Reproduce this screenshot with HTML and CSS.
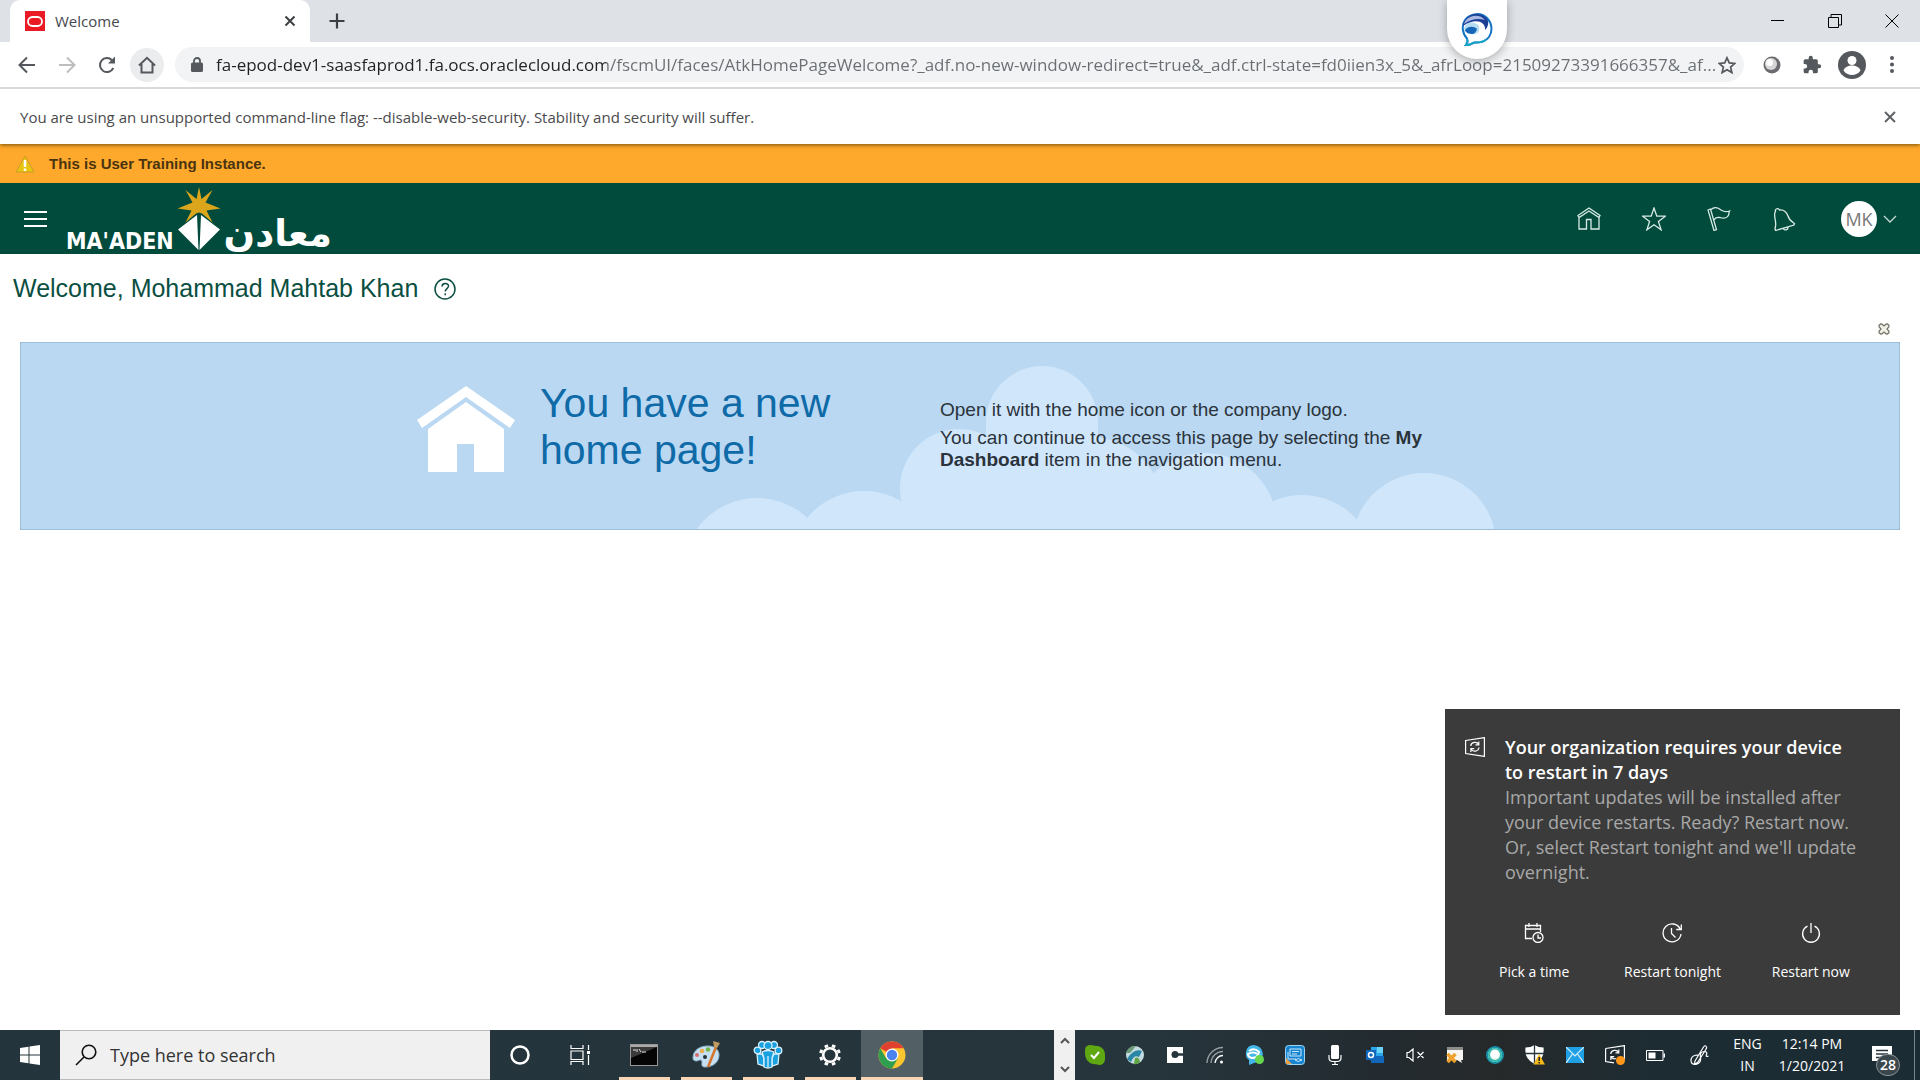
FILE: index.html
```html
<!DOCTYPE html>
<html lang="en">
<head>
<meta charset="utf-8">
<meta name="viewport" content="width=device-width, initial-scale=1">
<title>Welcome</title>
<link rel="stylesheet" href="styles.css">
</head>
<body>
<div class="desktop">
  <header class="browser">
    <div class="tabstrip">
      <div class="tab">
        <svg class="favicon" width="20" height="20" viewBox="0 0 20 20"><rect width="20" height="20" fill="#ea1b24"/><rect x="3" y="6" width="14" height="9" rx="4.500" fill="none" stroke="#fff" stroke-width="1.800"/></svg>
        <span class="tab-title">Welcome</span>
        <button class="icon-btn tab-close" aria-label="Close tab"><svg width="12" height="12" viewBox="0 0 12 12"><path d="M1.500 1.500l9 9M10.500 1.500l-9 9" stroke="#3c4043" stroke-width="2"/></svg></button>
      </div>
      <button class="icon-btn new-tab" aria-label="New tab"><svg width="16" height="16" viewBox="0 0 16 16"><path d="M8 0.500v15M0.500 8h15" stroke="#3c4043" stroke-width="2.200"/></svg></button>
      <div class="window-controls">
        <button class="icon-btn" aria-label="Minimize"><svg width="14" height="14" viewBox="0 0 14 14"><path d="M0 6.500h13" stroke="#000"/></svg></button>
        <button class="icon-btn" aria-label="Restore"><svg width="14" height="14" viewBox="0 0 14 14" fill="none" stroke="#000"><path d="M0.500 3.500h10v10h-10zM3 3.500v-3h10.500v10.500h-3"/></svg></button>
        <button class="icon-btn" aria-label="Close"><svg width="14" height="14" viewBox="0 0 14 14"><path d="M0.500 0.500l13 13M13.500 0.500l-13 13" stroke="#000"/></svg></button>
      </div>
    </div>
    <div class="toolbar">
      <button class="icon-btn nav-btn" aria-label="Back"><svg width="18" height="18" viewBox="0 0 18 18" fill="none" stroke="#55585c" stroke-width="2"><path d="M17 9H2M9 1.500L1.500 9 9 16.500"/></svg></button>
      <button class="icon-btn nav-btn" aria-label="Forward"><svg width="18" height="18" viewBox="0 0 18 18" fill="none" stroke="#bdbec0" stroke-width="2"><path d="M1 9h15M9 1.500L16.500 9 9 16.500"/></svg></button>
      <button class="icon-btn nav-btn" aria-label="Reload"><svg width="18" height="18" viewBox="0 0 18 18"><path d="M15.300 12A7 7 0 1 1 14 4.200" fill="none" stroke="#55585c" stroke-width="2"/><path d="M17 0.500V7.500H10z" fill="#55585c"/></svg></button>
      <button class="icon-btn nav-btn nav-home" aria-label="Home"><svg width="18" height="18" viewBox="0 0 18 18" fill="none" stroke="#55585c" stroke-width="2"><path d="M1 9.500L9 1.800l8 7.700M3.500 8v8.500h11V8"/></svg></button>
      <div class="omnibox">
        <svg width="12" height="16" viewBox="0 0 12 16"><rect y="5.500" width="12" height="9.500" rx="1.500" fill="#55585c"/><path d="M3 6V4a3 3 0 0 1 6 0v2" fill="none" stroke="#55585c" stroke-width="1.800"/></svg>
        <input class="url" type="text" aria-label="Address" value="fa-epod-dev1-saasfaprod1.fa.ocs.oraclecloud.com/fscmUI/faces/AtkHomePageWelcome?_adf.no-new-window-redirect=true&amp;_adf.ctrl-state=fd0iien3x_5&amp;_afrLoop=21509273391666357&amp;_af...">
        <button class="icon-btn" aria-label="Bookmark this page"><svg width="18" height="18" viewBox="0 0 18 18"><path d="M9 1.800l2.300 5.100 5.500.500-4.200 3.700 1.300 5.500L9 13.700l-4.900 2.900 1.300-5.500L1.200 7.400l5.500-.500z" fill="none" stroke="#55585c" stroke-width="1.700"/></svg></button>
      </div>
      <button class="icon-btn tool-btn" aria-label="Extension"><svg width="18" height="18" viewBox="0 0 18 18"><circle cx="9" cy="9" r="8.500" fill="#6b6c6f"/><circle cx="8" cy="8" r="6" fill="#d6d6d6"/><circle cx="6.500" cy="6.500" r="3.500" fill="#fff"/></svg></button>
      <button class="icon-btn tool-btn" aria-label="Extensions"><svg width="20" height="20" viewBox="0 0 24 24"><path fill="#55585c" d="M20.500 11H19V7a2 2 0 0 0-2-2h-4V3.500a2.500 2.500 0 0 0-5 0V5H4a2 2 0 0 0-2 2v3.800h1.500a2.700 2.700 0 0 1 0 5.400H2V20a2 2 0 0 0 2 2h3.800v-1.500a2.700 2.700 0 0 1 5.400 0V22H17a2 2 0 0 0 2-2v-4h1.500a2.500 2.500 0 0 0 0-5z"/></svg></button>
      <button class="icon-btn tool-btn" aria-label="Profile"><svg width="28" height="28" viewBox="0 0 28 28"><circle cx="14" cy="14" r="14" fill="#55585c"/><circle cx="14" cy="9.500" r="4.500" fill="#fff"/><path d="M5.500 19.500c1-3.500 5-5 8.500-5s7.500 1.500 8.500 5a10.200 10.200 0 0 1-17 0z" fill="#fff"/></svg></button>
      <button class="icon-btn tool-btn" aria-label="Menu"><svg width="4" height="17" viewBox="0 0 4 17" fill="#55585c"><circle cx="2" cy="2" r="2"/><circle cx="2" cy="8.500" r="2"/><circle cx="2" cy="15" r="2"/></svg></button>
    </div>
    <div class="infobar">
      <p>You are using an unsupported command-line flag: --disable-web-security. Stability and security will suffer.</p>
      <button class="icon-btn" aria-label="Dismiss"><svg width="12" height="12" viewBox="0 0 12 12"><path d="M1 1l10 10M11 1L1 11" stroke="#5f6368" stroke-width="2"/></svg></button>
    </div>
    <div class="assistant"><svg width="32" height="34" viewBox="0 0 32 34">
      <path d="M6 25.500C1 20 .5 12 4 7 9 0 20-1 26 5c5 5 6 13 2 19-4 5-9 6-14 5.500-3 0-4 3-9 2.500 2-2 2-4 1-6.500z" fill="#fff" stroke="#1473c4" stroke-width="2"/>
      <path d="M5 6C10-.5 20-.5 25.500 5c2.500 3 2.500 8-1.500 12 1-8-9-13-22-4 0-3 1-5 3-7z" fill="#1c3f94"/><path d="M5 7C11 1 20 2 24 7 17 5 10 6 3 11q.5-2 2-4z" fill="#a9b9e4"/>
      <path d="M3 15C6 8 14 8 18 13c1 4 0 6-3 8C9 22 4 20 3 15z" fill="#b7dbf3"/><path d="M4 17c3-4 9-4 12-1-1 3-2 4-4 5-4 0-7-1-8-4z" fill="#1565b8"/><path d="M14 9c4 1 6 5 4 9 3-1 5-3 5-5-2-3-5-4-9-4z" fill="#fff"/>
      <path d="M6 26c1 3 0 4-1 6 5 .5 6-2.500 9-2.500q7 .5 11-3" fill="none" stroke="#18a3c9" stroke-width="2"/></svg></div>
  </header>

  <div class="instance-banner">
    <svg width="20" height="18" viewBox="0 0 20 18"><path d="M10 1l9 16H1z" fill="#e9c40f" stroke="#c99c28" stroke-linejoin="round"/><path d="M10 5v7M10 13.500v2.500" stroke="#fff" stroke-width="2.500"/></svg>
    <strong>This is User Training Instance.</strong>
  </div>

  <nav class="app-header">
    <button class="icon-btn menu-btn" aria-label="Navigator"><svg width="24" height="16" viewBox="0 0 24 16"><path d="M0 1h23M0 8h23M0 15h23" stroke="#fff" stroke-width="2"/></svg></button>
    <a class="logo" href="#">
      <span class="logo-latin">MA'ADEN</span>
      <svg width="46" height="66" viewBox="175 186 46 66">
        <path d="M198 187l2.500 12 11-9-7 12.500 15 6-14 2 6 12-10.500-9-3-1-3 1-10.500 9 6-12-14-2 15-6-7-12.500 11 9z" fill="#dba51c"/>
        <path d="M196 215l1.500 35L177 229.500zM200 215l19 14.500L198.500 250z" fill="#fff"/>
      </svg>
      <span class="logo-arabic" lang="ar">معادن</span>
    </a>
    <div class="header-tools">
      <a class="tool" href="#" aria-label="Home"><svg width="24" height="24" viewBox="0 0 24 24"><path d="M2 10.500v11.500h7.500v-9.500h4.500V22H22V10.500M1 8.500L12 1l11 7.500-1 2L12 4 2 10.500z"/></svg></a>
      <a class="tool" href="#" aria-label="Favorites"><svg width="24" height="24" viewBox="0 0 24 24"><path d="M12 1l2.800 8.200h8.600l-7 5.200 2.700 8.400L12 17.700l-7.100 5.100 2.700-8.400-7-5.200h8.600z"/></svg></a>
      <a class="tool" href="#" aria-label="Watchlist"><svg width="24" height="24" viewBox="0 0 24 24"><path d="M1 3l2.500-1 6 20.500-2.500 1zM4 2.500c3-2.500 7-2 10 .5 3 2 6 2 8.500 1-1 2 0 3-1.500 5-2 3-5 2.500-8 1.500-3-.5-5 .5-6 2.500"/></svg></a>
      <a class="tool" href="#" aria-label="Notifications"><svg width="24" height="24" viewBox="0 0 24 24"><path d="M3.500 4.500a2 2 0 1 1 4-1.500c4-.5 7 2 8.500 6 1 4 3 5 6.500 7.500L22 18 3.500 23.500 3 21.500c1.500-4 .5-7 0-10C2.500 8 2 6 3.500 4.500zM11.500 21.500c.5 2.500 5 1.500 4.500-1.500"/></svg></a>
      <button class="user" aria-label="Settings and actions"><span class="avatar">MK</span><svg width="14" height="8" viewBox="0 0 14 8"><path d="M1 1l6 6 6-6" fill="none" stroke="#c5dbd6" stroke-width="1.300"/></svg></button>
    </div>
  </nav>

  <main class="page">
    <div class="page-title">
      <h1>Welcome, Mohammad Mahtab Khan</h1>
      <button class="icon-btn" aria-label="Help"><svg width="22" height="22" viewBox="0 0 22 22" fill="none" stroke="#0b4f42" stroke-width="1.500"><circle cx="11" cy="11" r="10"/><path d="M8 8.500c0-4 6.500-4 6.500-.500 0 2.500-3.300 2.700-3.300 5.500M11.200 15.300v2"/></svg></button>
    </div>
    <div class="notice-tools"><button class="icon-btn" aria-label="Close notice"><svg width="12" height="12" viewBox="0 0 12 12"><path d="M1 2.500L2.500 1l1.500.2 2 1.800 2-1.800L9.500 1 11 2.500 10.800 4 9 6l1.800 2 .2 1.500L9.500 11 8 10.800 6 9l-2 1.800-1.500.2L1 9.500 1.200 8 3 6 1.200 4z" fill="#f2f1e8" stroke="#77766c" stroke-width="1.300"/></svg></button></div>
    <section class="notice">
      <div class="notice-inner">
        <svg class="clouds" width="810" height="168" viewBox="693 361 810 168" fill="#d0e6fb">
          <circle cx="757" cy="572" r="74"/><circle cx="864" cy="565" r="74"/><circle cx="959" cy="488" r="59"/><circle cx="1042" cy="422" r="56"/><circle cx="1090" cy="511" r="74"/><circle cx="1204" cy="526" r="73"/><circle cx="1302" cy="569" r="74"/><circle cx="1424" cy="545" r="72"/><path d="M986 422h112v60h106v60H905v-54h81z"/>
        </svg>
        <svg class="house" width="98" height="88" viewBox="0 0 98 88" fill="#fff"><path d="M49 0l49 34-5 8-44-31L5 42l-5-8z"/><path d="M49 16l38 27v43H57V58H40v28H11V43z"/></svg>
        <h2>You have a new<br>home page!</h2>
        <div class="notice-text">
          <p>Open it with the home icon or the company logo.</p>
          <p>You can continue to access this page by selecting the <b>My Dashboard</b> item in the navigation menu.</p>
        </div>
      </div>
    </section>
  </main>

  <aside class="toast">
    <svg class="toast-icon" width="20" height="20" viewBox="0 0 20 20" fill="none" stroke="#fff" stroke-width="1.200"><path d="M.6 3.500L19.400.6v18.800L.6 16.500z"/><path d="M5.700 9c.500-4 6-5 8-1.500M13.800 4.500v3.300h-3.300M14 10.500c-.500 4-6 5-8 1.500M5.900 15v-3.300h3.300"/></svg>
    <div class="toast-text">
      <h3>Your organization requires your device to restart in 7 days</h3>
      <p>Important updates will be installed after your device restarts. Ready? Restart now. Or, select Restart tonight and we'll update overnight.</p>
    </div>
    <div class="toast-actions">
      <button><svg width="20" height="20" viewBox="0 0 20 20"><path d="M8 15.500H1.500V2.500h15V9M1.500 6h15M5 0v4M13 0v4"/><circle cx="14" cy="14.500" r="5"/><path d="M14 11.500v3.500h3"/></svg>Pick a time</button>
      <button><svg width="20" height="20" viewBox="0 0 20 20"><path d="M19 11a9 9 0 1 1-.800-5M19.300 1.500v5h-5M9.500 5v5.500l4 4"/></svg>Restart tonight</button>
      <button><svg width="20" height="20" viewBox="0 0 20 20"><path d="M6.500 3.200a8.400 8.400 0 1 0 7 0M10 0v10"/></svg>Restart now</button>
    </div>
  </aside>

  <footer class="taskbar">
    <button class="task start" aria-label="Start"><svg width="20" height="20" viewBox="0 0 20 20" fill="#fff"><path d="M0 3l8.500-1.300v7.800H0zM9.500 1.500L20 0v9.500H9.500zM0 10.500h8.500v7.800L0 17zM9.500 10.500H20V20L9.500 18.500z"/></svg></button>
    <label class="search">
      <svg width="22" height="22" viewBox="0 0 22 22" fill="none" stroke="#111" stroke-width="1.600"><circle cx="14" cy="8" r="6.800"/><path d="M9 13l-8 8"/></svg>
      <input type="text" placeholder="Type here to search" aria-label="Type here to search">
    </label>
    <button class="task" aria-label="Cortana"><svg width="20" height="20" viewBox="0 0 20 20"><circle cx="10" cy="10" r="8.500" fill="none" stroke="#fff" stroke-width="2.500"/></svg></button>
    <button class="task" aria-label="Task View"><svg width="20" height="20" viewBox="0 0 20 20" fill="none" stroke="#fff" stroke-width="1.200"><path d="M1 0v3.500h12V0M1 20v-3.500h12V20M1 6h12v8.500H1zM18.500 0v5M18.500 10v10"/><path d="M17 6h3v3h-3z" fill="#fff" stroke="none"/></svg></button>
    <div class="apps">
      <button class="task app" aria-label="Command Prompt"><svg width="28" height="22" viewBox="0 0 28 22"><rect x=".5" y=".5" width="27" height="21" fill="#050505" stroke="#989898"/><path d="M1 1h26v2H1z" fill="#aaa"/><path d="M1 3h26L1 14z" fill="#3b3b3b"/><path d="M3 6h3M7 5v3M9 5l2 3M12 8h4" stroke="#ddd"/></svg></button>
      <button class="task app" aria-label="Paint"><svg width="30" height="30" viewBox="0 0 30 30"><path d="M2 18C2 10 9 6 17 6c7 0 11 4 11 9 0 7-6 12-14 12-4 0-3-3-3-5 0-3-3-2-5-1-3 0-4-1-4-3z" fill="#c6e0f1" stroke="#8fb5ce"/><circle cx="6" cy="15" r="2" fill="#d86a6a"/><circle cx="11" cy="11" r="2.300" fill="#e9b04d"/><circle cx="17" cy="9.500" r="2.300" fill="#75b64b"/><circle cx="14" cy="17" r="2" fill="#24343c"/><path d="M25 7l-8 20" stroke="#d5742b" stroke-width="2.500"/><path d="M22 1l7 2-3 5-3-1z" fill="#c19a60"/></svg></button>
      <button class="task app" aria-label="Teamwork"><svg width="30" height="30" viewBox="0 0 30 30" fill="#1a9fdf" stroke="#d9f2ff" stroke-width="1.300"><circle cx="9" cy="5" r="3.500"/><circle cx="21" cy="5" r="3.500"/><circle cx="4.500" cy="10.500" r="3.300"/><circle cx="25.500" cy="10.500" r="3.300"/><path d="M4 14h5l2 4v8l-6-2zM26 14h-5l-2 4v8l6-2z"/><circle cx="15" cy="5.500" r="4"/><path d="M9 12q6-3 12 0l-2 6v9q-4 2-8 0v-9z"/><path d="M15 16v11"/></svg></button>
      <button class="task app" aria-label="Settings"><svg width="24" height="24" viewBox="0 0 24 24" fill="none" stroke="#fff"><circle cx="12" cy="12" r="6.800" stroke-width="2.600"/><path d="M20 12h3M1 12h3M12 1v3M12 20v3M17.700 6.300l2-2M4.300 19.700l2-2M6.300 6.300l-2-2M17.700 17.700l2 2" stroke-width="3.600" transform="rotate(22.500 12 12)"/></svg></button>
      <button class="task app active" aria-label="Google Chrome"><svg width="28" height="28" viewBox="0 0 28 28"><circle cx="14" cy="14" r="13.500" fill="#fbc52f"/><path d="M14 14L2.300 7.300A13.500 13.500 0 0 1 25.700 7.300H14z" fill="#e2402f"/><path d="M14 14L8.200 17.400 2.300 7.300A13.500 13.500 0 0 0 14 27.500l5.800-10.100z" fill="#2f9e4f"/><circle cx="14" cy="14" r="6.500" fill="#fff"/><circle cx="14" cy="14" r="5.200" fill="#4a83ee"/></svg></button>
    </div>
    <div class="scroller">
      <button class="icon-btn" aria-label="Scroll up"><svg width="10" height="7" viewBox="0 0 10 7"><path d="M1 6l4-4 4 4" fill="none" stroke="#555" stroke-width="2"/></svg></button>
      <button class="icon-btn" aria-label="Scroll down"><svg width="10" height="7" viewBox="0 0 10 7"><path d="M1 1l4 4 4-4" fill="none" stroke="#555" stroke-width="2"/></svg></button>
    </div>
    <div class="tray">
      <span><svg width="20" height="20" viewBox="0 0 20 20"><path d="M0 5q0-5 6-5 4 1 7 1 7 2 7 9v5q-1 5-6 5-3-1-6-1Q0 17 0 8z" fill="#5fa811"/><path d="M6 10l3 3 5-6" fill="none" stroke="#fff" stroke-width="2"/></svg></span>
      <span><svg width="20" height="20" viewBox="0 0 20 20"><circle cx="10" cy="10" r="9" fill="#c3dbe0"/><path d="M2 14q7-11 15-8l-3 6q-5-3-8 5z" fill="#2a86a5"/><path d="M1 8q3-8 10-7L5 8z" fill="#6a9a76"/><path d="M10 13q4-2 5 4-3 3-6 2z" fill="#60a445"/></svg></span>
      <span><svg width="16" height="16" viewBox="0 0 16 16"><rect width="16" height="16" fill="#fff"/><circle cx="8" cy="7.500" r="3.500" fill="#26343c"/><path d="M8 7.500h8" stroke="#26343c" stroke-width="2.500"/></svg></span>
      <span><svg width="18" height="18" viewBox="0 0 18 18" fill="none" stroke="#98a0a5" stroke-width="1.300"><path d="M1 17A16 16 0 0 1 17 1.500M5 17A12 12 0 0 1 17 5.500"/><path d="M9 17a8 8 0 0 1 8-7.500" stroke="#fff"/><circle cx="15.500" cy="16" r="1.500" fill="#fff" stroke="none"/></svg></span>
      <span><svg width="20" height="20" viewBox="0 0 20 20"><path d="M1 7Q2 0 9 0q8 1 9 9-1 8-9 9l-5 2V15Q0 12 1 7z" fill="#42b6e6"/><path d="M4 6q5-4 10 1-1 6-7 6-4-1-4-4 6-3 9 0" fill="none" stroke="#fff" stroke-width="2"/><circle cx="14.500" cy="14.500" r="4.500" fill="#67d64f"/></svg></span>
      <span><svg width="20" height="20" viewBox="0 0 20 20"><rect x=".5" y=".5" width="19" height="19" rx="3" fill="#1684cf" stroke="#9dd4f4"/><path d="M5 4h11v7H5zM7 6.500h7M7 9h5M3 7v7h8M10 15q3-3 7 0-4 3-7 0" fill="none" stroke="#c6e8fb"/><path d="M1 13l6 6H1z" fill="#e9a04a"/></svg></span>
      <span><svg width="14" height="20" viewBox="0 0 14 20"><rect x="3" y="0" width="8" height="14" rx="1.500" fill="#fff"/><path d="M1 10v3q0 3.500 4 3.500h4q4 0 4-3.500v-3M7 17v3M4 19.500h6" fill="none" stroke="#fff" stroke-width="1.200"/></svg></span>
      <span><svg width="18" height="18" viewBox="0 0 18 18"><path d="M5 1h12v15H5z" fill="#28a8ea"/><path d="M11 1h6v6h-6z" fill="#69d0f7"/><path d="M5 10h13v7H5z" fill="#1066b8"/><rect y="4" width="10" height="10" fill="#0f66bd"/><circle cx="5" cy="9" r="2.500" fill="none" stroke="#fff" stroke-width="1.500"/></svg></span>
      <span><svg width="19" height="14" viewBox="0 0 19 14" fill="none" stroke="#fff" stroke-width="1.200"><path d="M1 4.500h2L7 1v12L3 9.500H1zM11.500 4l6 6M17.500 4l-6 6"/></svg></span>
      <span><svg width="18" height="18" viewBox="0 0 18 18"><path d="M1 1h16v13h-2l1 3-5-3H1z" fill="#f6f4f0"/><path d="M1 1h16v3H1z" fill="#8c8c88"/><path d="M1.500 8l8 8M9.500 8l-8 8" stroke="#f0a12b" stroke-width="3.500"/></svg></span>
      <span><svg width="18" height="18" viewBox="0 0 18 18"><circle cx="9" cy="9" r="8" fill="#d9f3f0" stroke="#1690a8" stroke-width="2"/><circle cx="9" cy="9" r="6" fill="none" stroke="#35b9a8" stroke-width="2"/><circle cx="9" cy="8" r="4.500" fill="#fff"/></svg></span>
      <span><svg width="20" height="20" viewBox="0 0 20 20"><path d="M9.500 0q4 2.500 9 2.500Q20 14 9.500 19-1 14 .5 2.500 6 2.500 9.500 0z" fill="#fff"/><path d="M9.500 0v19M0 8.500h19" stroke="#26343c" stroke-width="1.300"/><path d="M14 9l6 10.500H8.500z" fill="#f6b91c"/><path d="M14.200 12v4M14.200 17v1.500" stroke="#222" stroke-width="1.500"/></svg></span>
      <span><svg width="18" height="16" viewBox="0 0 18 16"><rect width="18" height="16" fill="#1fa0e4"/><path d="M0 0l9 9 9-9M0 16l6.500-9M18 16l-6.500-9" fill="none" stroke="#d7f0ff" stroke-width="1.200"/></svg></span>
      <span><svg width="20" height="20" viewBox="0 0 20 20" fill="none" stroke="#fff" stroke-width="1.200"><path d="M.6 3.500L19.400.6v14M9 17.800L.6 16.500v-13"/><path d="M5.700 9c.500-4 6-5 8-1.500M13.800 4.500v3.300h-3.300M11 13.500q-3.500 1-5-1.500M5.900 15v-3.300h3.300"/><circle cx="15.500" cy="15.500" r="4.500" fill="#ff981a" stroke="none"/></svg></span>
      <span><svg width="19" height="11" viewBox="0 0 19 11"><path d="M.5.500h16.500v10H.5z" fill="none" stroke="#fff"/><path d="M2.500 2.500h7v6h-7zM17.500 3.500h1.500v4h-1.500z" fill="#fff"/></svg></span>
      <span class="pen"><svg width="20" height="20" viewBox="0 0 20 20" fill="none" stroke="#fff" stroke-width="1.200"><path d="M5 16L13.500 2q2-2.500 3 0 .5 1-1 3L7.500 17.500 4.500 19zM8 10Q2 10 1 14.500q-.5 5 4.500 5 6-1 5-7t4-6q3 0 2 3t2 1.500"/></svg></span>
    </div>
    <div class="status language"><span>ENG</span><span>IN</span></div>
    <div class="status clock"><span>12:14 PM</span><span>1/20/2021</span></div>
    <button class="task notifications" aria-label="Notifications"><svg width="20" height="19" viewBox="0 0 20 19"><path d="M0 0h20v15H9l-4 4v-4H0z" fill="#fff"/><path d="M4 4.500h12M4 8h12M4 11.500h8" stroke="#26343c" stroke-width="1.300"/></svg><span class="count">28</span></button>
    <div class="peek"></div>
  </footer>
</div>
</body>
</html>
```
FILE: styles.css
```css
* { box-sizing: border-box; }
body { margin: 0; font-family: "Open Sans", "Noto Sans", sans-serif; background: #fff; }
h1, h2, h3, p { margin: 0; font-weight: 400; }
button, input { font: inherit; color: inherit; border: 0; padding: 0; background: none; }
svg { display: block; flex: none; }
.desktop { min-height: 100vh; display: flex; flex-direction: column; }
.icon-btn { display: flex; align-items: center; justify-content: center; }

/* Browser chrome */
.browser { position: relative; box-shadow: 0 1px 4px rgba(60, 40, 0, .7); }
.tabstrip { height: 42px; display: flex; align-items: center; background: #dee1e6; padding-left: 10px; }
.tab { width: 300px; height: 42px; display: flex; align-items: center; gap: 10px; padding: 0 14px 0 15px; background: #fff; border-radius: 10px 10px 0 0; }
.tab-title { flex: 1; font-size: 15px; color: #45484c; }
.new-tab { width: 54px; height: 42px; }
.window-controls { margin-left: auto; display: flex; }
.window-controls .icon-btn { width: 57px; height: 36px; }
.toolbar { height: 47px; display: flex; align-items: center; padding: 0 8px 0 10px; border-bottom: 2px solid #d9d9da; }
.nav-btn { width: 34px; height: 34px; margin-right: 6px; border-radius: 17px; }
.nav-home { background: #ebecee; }
.omnibox { flex: 1; min-width: 0; height: 35px; margin: 0 8px 0 5px; padding: 0 8px 0 16px; display: flex; align-items: center; background: #f1f3f4; border-radius: 18px; }
.url { flex: 1; min-width: 0; height: 30px; margin-left: 13px; font-size: 17px; color: transparent; background: linear-gradient(90deg, #202124 390px, #6a6e73 390px); background-clip: text; -webkit-background-clip: text; }
.tool-btn { width: 40px; height: 40px; }
.infobar { min-height: 55px; display: flex; align-items: center; justify-content: space-between; padding: 0 24px 0 20px; background: #fff; font-size: 15px; color: #4a4a4c; }
.assistant { position: absolute; top: 0; right: 413px; width: 60px; height: 59px; padding: 13px 0 0 14px; background: #fff; border-radius: 0 0 30px 30px; box-shadow: 0 2px 10px rgba(0, 0, 0, .3); }

/* Application header */
.instance-banner { min-height: 39px; display: flex; align-items: center; gap: 14px; padding: 0 15px; background: #ffa92c; font-family: "Liberation Sans", Arial, sans-serif; font-size: 15px; color: #4a3410; }
.app-header { min-height: 71px; display: flex; align-items: center; background: #004b3b; padding: 0 23px 0 24px; font-family: "Liberation Sans", Arial, sans-serif; }
.logo { display: flex; align-items: flex-end; gap: 2px; height: 66px; margin-left: 18px; color: #fff; text-decoration: none; font-weight: 700; }
.logo-latin { font-family: "DejaVu Sans Condensed", "DejaVu Sans", sans-serif; font-size: 23px; line-height: 22px; }
.logo-arabic { font-family: "DejaVu Sans", sans-serif; font-size: 37px; line-height: 36px; }
.header-tools { margin-left: auto; display: flex; align-items: center; }
.tool { width: 65px; display: flex; justify-content: center; }
.tool svg { fill: none; stroke: #d8ebe6; stroke-width: 1.300; }
.user { display: flex; align-items: center; gap: 6px; margin-left: 25px; }
.avatar { width: 36px; height: 36px; border-radius: 50%; background: #fff; color: #777; font: 18px/36px "Open Sans", sans-serif; }

/* Page */
.page { flex: 1; padding: 0 20px; font-family: "Liberation Sans", Arial, sans-serif; }
.page-title { display: flex; align-items: center; gap: 16px; min-height: 69px; margin-left: -7px; }
.page-title h1 { font-size: 25px; color: #0b4f42; }
.notice-tools { display: flex; justify-content: flex-end; padding: 0 10px 7px; }
.notice { border: 1px solid #9cc0dc; background: #bad8f2; overflow: hidden; }
.notice-inner { position: relative; max-width: 1086px; min-height: 186px; margin: 0 auto; padding-bottom: 12px; display: grid; grid-template-columns: 98px 375px 1fr; column-gap: 25px; align-items: center; }
.clouds { position: absolute; right: 0; bottom: 0; }
.house, .notice h2, .notice-text { position: relative; }
.notice h2 { font-size: 41px; line-height: 47px; color: #0f6aa8; padding-bottom: 6px; }
.notice-text { max-width: 500px; padding-top: 10px; font-size: 19px; line-height: 22px; color: #2b333b; }
.notice-text p + p { margin-top: 6px; }

/* Toast */
.toast { position: fixed; right: 20px; bottom: 65px; width: 455px; min-height: 306px; padding: 26px 20px; display: grid; grid-template-columns: 20px 1fr; column-gap: 20px; align-content: start; background: #3b3b3b; color: #fff; font-size: 18px; line-height: 25px; }
.toast-icon { margin-top: 2px; }
.toast-text { padding-right: 20px; }
.toast h3 { padding-right: 12px; font-size: 18px; font-weight: 600; }
.toast p { color: #a8a8a8; }
.toast-actions { grid-column: 1 / -1; display: grid; grid-template-columns: repeat(3, 1fr); margin-top: 38px; font-size: 14px; }
.toast-actions button { display: flex; flex-direction: column; align-items: center; gap: 16px; }
.toast-actions svg { fill: none; stroke: #fff; stroke-width: 1.300; }

/* Taskbar */
.taskbar { height: 50px; display: flex; background: linear-gradient(90deg, #24343c, #26353c 60%, #232b30 72%, #26292a 78%, #1d2c33 86%, #1b2c34); color: #fff; }
.task { width: 60px; flex: none; display: flex; align-items: center; justify-content: center; }
.search { width: 430px; flex: 0 1 430px; min-width: 0; display: flex; align-items: center; gap: 13px; padding: 0 15px; background: #f0f0f0; border: 1px solid #b9bcbe; border-width: 1px 0; }
.search input { flex: 1; min-width: 0; font-size: 18px; color: #333; }
.search input::placeholder { color: #333; opacity: 1; }
.apps { display: flex; margin-left: 3px; }
.app { position: relative; width: 62px; }
.app::after { content: ""; position: absolute; left: 6px; right: 5px; bottom: 0; height: 3px; background: #f8d5b5; }
.active { background: #526065; }
.active::after { left: 0; right: 0; }
.scroller { width: 21px; margin-left: auto; display: flex; flex-direction: column; justify-content: space-between; align-items: center; padding: 7px 0; background: #f0f0f0; }
.tray { display: flex; }
.tray span { width: 40px; display: flex; align-items: center; justify-content: center; }
.tray .pen { margin-left: 5px; }
.status { display: flex; flex-direction: column; align-items: center; justify-content: center; font-size: 14px; line-height: 22px; }
.language { width: 55px; }
.clock { width: 74px; }
.notifications { width: 65px; position: relative; }
.count { position: absolute; left: 27px; bottom: 4px; width: 24px; height: 22px; border-radius: 11px; border: 1px solid #8a9296; background: #3b474d; font-size: 14px; font-weight: 600; line-height: 20px; text-align: center; }
.peek { width: 6px; border-left: 1px solid #7b858a; }
```
